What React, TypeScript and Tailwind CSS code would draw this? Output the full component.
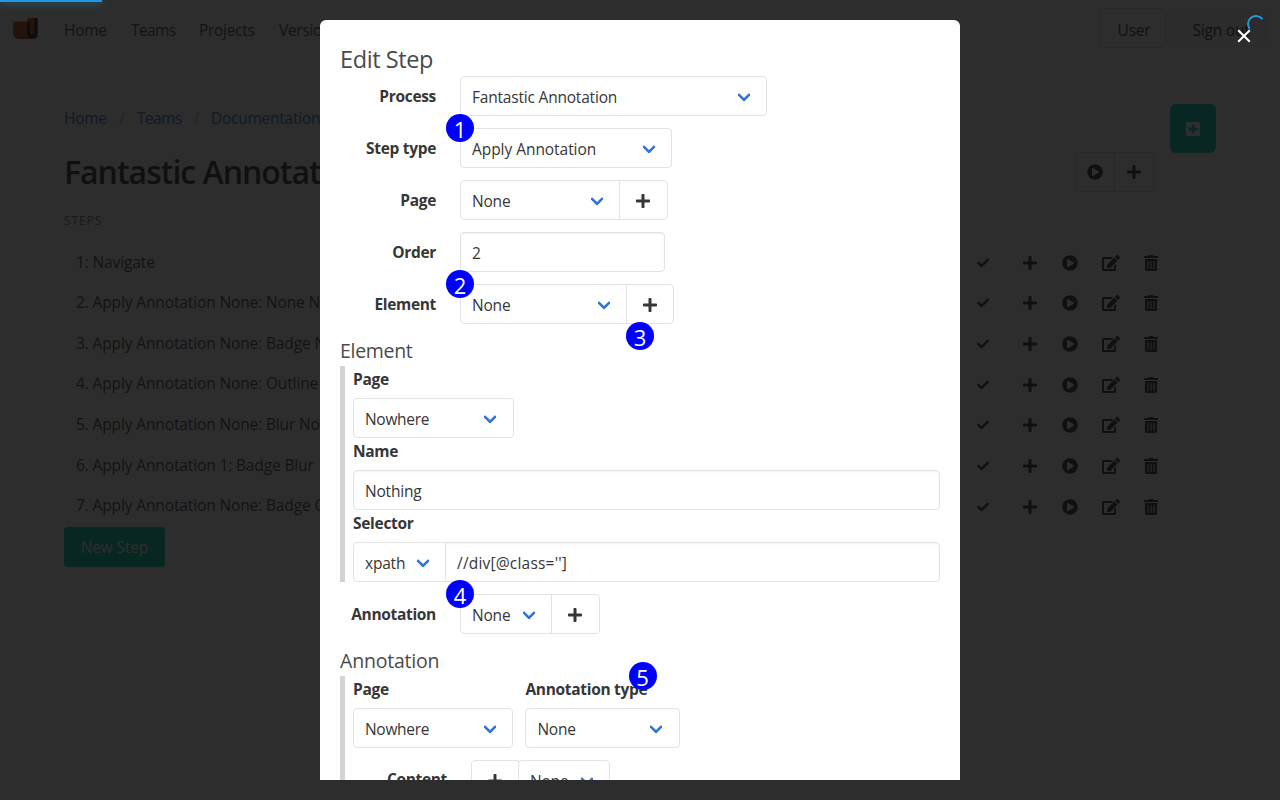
import type { ReactNode } from "react";
import { FaCheck, FaEdit, FaPlayCircle, FaPlus, FaPlusSquare, FaTrashAlt } from "react-icons/fa";

const steps = [
  "1: Navigate",
  "2. Apply Annotation None: None None",
  "3. Apply Annotation None: Badge None",
  "4. Apply Annotation None: Outline None",
  "5. Apply Annotation None: Blur None",
  "6. Apply Annotation 1: Badge Blur",
  "7. Apply Annotation None: Badge Outline",
];

function Select({ children, className = "" }: { children: ReactNode; className?: string }) {
  return (
    <div className={`relative h-10 shrink-0 rounded border border-[#e2e2e2] bg-white pl-[11px] leading-[38px] text-[#363636] ${className}`}>
      <span className="block pt-px">{children}</span>
      <span className="absolute right-[17.5px] top-1/2 -mt-[6.500px] size-[10px] -rotate-45 rounded-[2px] border-b-[3px] border-l-[3px] border-[#3273dc]" />
    </div>
  );
}

function Input({ children, className = "" }: { children: ReactNode; className?: string }) {
  return (
    <div className={`h-10 rounded border border-[#e2e2e2] bg-white pl-[11px] pt-px leading-[38px] text-[#363636] shadow-[inset_0_1px_2px_rgba(10,10,10,0.05)] ${className}`}>
      {children}
    </div>
  );
}

function PlusButton({ className = "" }: { className?: string }) {
  return (
    <button className={`flex h-10 shrink-0 items-center justify-center border border-[#e2e2e2] bg-white pt-px text-[#363636] ${className}`}>
      <FaPlus size={16} />
    </button>
  );
}

function Row({ label, children }: { label: string; children: ReactNode }) {
  return (
    <div className="mb-3 flex">
      <div className="mr-6 w-24 shrink-0 pt-[8px] text-right font-bold leading-6 tracking-[-0.32px] text-[#363636]">{label}</div>
      <div className="flex">{children}</div>
    </div>
  );
}

function Label({ children }: { children: ReactNode }) {
  return <div className="mb-2 h-6 pt-px font-bold leading-6 tracking-[-0.3px] text-[#363636]">{children}</div>;
}

function Badge({ n, className }: { n: number; className: string }) {
  return (
    <div className={`absolute size-7 rounded-full bg-[#0000ff] pt-px text-center text-[22px] leading-7 tracking-normal text-white ${className}`}>
      {n}
    </div>
  );
}

function Page() {
  return (
    <div className="h-full">
      <nav className="flex h-[60px] items-center pl-3 pr-3">
        <svg width="27" height="24" viewBox="0 0 27 24">
          <defs>
            <linearGradient id="logo" x1="0" y1="0" x2="1" y2="1">
              <stop offset="0" stopColor="#b8581a" />
              <stop offset="1" stopColor="#b03c18" />
            </linearGradient>
          </defs>
          <path d="M1 3.500H15V2Q15 0 17.500 0H25.500V17Q25.500 21 21.500 21H7Q1 21 1 14Z" fill="url(#logo)" />
          <path d="M16.500 4V14.500Q16.500 18.500 20 18.500Q24 18.500 24 14.500V0" fill="none" stroke="#161616" strokeWidth="3" />
        </svg>
        <div className="-mt-px ml-[25px] flex flex-1 tracking-[-0.3px]">
          <span className="w-[67px]">Home</span>
          <span className="w-[68px] tracking-[-0.6px]">Teams</span>
          <span className="w-[80px]">Projects</span>
          <span>Versions</span>
        </div>
        <div className="-mt-1 flex gap-2">
          <span className="flex h-10 w-[66px] items-center justify-center rounded border border-[#dbdbdb] pl-[2px] pt-[3px] text-[#363636]">User</span>
          <span className="flex h-10 w-[94px] items-center justify-center rounded bg-[#f5f5f5] pt-[3px] text-[#363636]">Sign out</span>
        </div>
      </nav>
      <main className="px-16 pt-11">
        <div className="flex h-12">
          <div className="flex flex-1 pt-[2px] tracking-[-0.25px] text-[#3273dc]">
            <span className="w-[55px] tracking-[-0.3px]">Home</span>
            <span className="w-[18px] text-[#b5b5b5]">/</span>
            <span className="w-[57px] tracking-[-0.6px]">Teams</span>
            <span className="w-[17px] text-[#b5b5b5]">/</span>
            <span>Documentation</span>
          </div>
          <span className="flex h-[49px] w-[46px] items-center justify-center rounded-md bg-[#00d1b2] text-white">
            <FaPlusSquare size={16} />
          </span>
        </div>
        <div className="flex h-10 items-center pr-[62px]">
          <h1 className="flex-1 whitespace-nowrap text-[32px] font-semibold leading-10 tracking-[-1px] text-[#363636]">Fantastic Annotation</h1>
          <div className="flex text-[#363636]">
            <span className="flex h-10 w-[39px] items-center justify-center rounded-l border border-[#dbdbdb] pr-[2px]"><FaPlayCircle size={16} /></span>
            <span className="-ml-px flex h-10 w-10 items-center justify-center rounded-r border border-[#dbdbdb]"><FaPlus size={16} /></span>
          </div>
        </div>
        <div className="h-[50.500px] pt-5 text-[12px] leading-[18px] tracking-[0.9px] text-[#7a7a7a]">STEPS</div>
        {steps.map((s) => (
          <div key={s} className="flex h-[40.65px] items-center pl-3">
            <span className="mt-[-2.500px] w-[884px] shrink-0 tracking-[-0.13px]">{s}</span>
            <span className="flex h-6 w-9 items-center justify-center rounded bg-[#fafafa] pl-[9px] text-[#363636]"><FaCheck size={12} /></span>
            <span className="ml-px flex w-[62px] justify-center pl-1"><FaPlus size={16} className="text-[#363636]" /></span>
            <span className="-ml-[9px] flex w-10 justify-center"><FaPlayCircle size={16} className="text-[#363636]" /></span>
            <span className="flex w-[41px] justify-center"><FaEdit size={18} className="text-[#363636]" /></span>
            <span className="flex w-10 justify-center"><FaTrashAlt size={16} className="text-[#363636]" /></span>
          </div>
        ))}
        <button className="h-10 w-[101px] rounded bg-[#00d1b2] tracking-[-0.15px] text-white">New Step</button>
      </main>
    </div>
  );
}

export default function App() {
  return (
    <div className="relative h-[800px] w-[1280px] overflow-hidden bg-white font-['Open_Sans','Noto_Sans',sans-serif] text-[15.5px] leading-6 tracking-[-0.2px] text-[#4a4a4a]">
      <Page />
      <div className="absolute inset-0 flex justify-center bg-[rgba(10,10,10,0.86)] py-5">
        <div className="relative w-[640px] overflow-hidden rounded-t-md bg-white p-5">
          <h2 className="h-9 pt-px text-[23.5px] leading-9 tracking-[-0.4px]">Edit Step</h2>
          <Row label="Process"><Select className="w-[307.4px]">Fantastic Annotation</Select></Row>
          <Row label="Step type"><Select className="w-[212px] tracking-[-0.05px]">Apply Annotation</Select></Row>
          <Row label="Page">
            <Select className="w-40 rounded-r-none">None</Select>
            <PlusButton className="-ml-px w-[48.5px] rounded-r" />
          </Row>
          <Row label="Order"><Input className="w-[205px]">2</Input></Row>
          <Row label="Element">
            <Select className="w-[167px] rounded-r-none">None</Select>
            <PlusButton className="-ml-px w-12 rounded-r" />
          </Row>
          <h3 className="h-[30px] text-[19.5px] leading-[30px] tracking-[-0.3px]">Element</h3>
          <div className="mb-3 h-[216px] border-l-[5px] border-[#d3d3d3] pl-2">
            <Label>Page</Label>
            <Select className="w-[160.5px] tracking-[-0.3px]">Nowhere</Select>
            <Label>Name</Label>
            <Input>Nothing</Input>
            <Label>Selector</Label>
            <div className="flex">
              <Select className="w-[93px] rounded-r-none">xpath</Select>
              <Input className="-ml-px flex-1 rounded-l-none tracking-[0.2px]">//div[@class='']</Input>
            </div>
          </div>
          <Row label="Annotation">
            <Select className="w-[92px] rounded-r-none">None</Select>
            <PlusButton className="-ml-px w-[48.5px] rounded-r" />
          </Row>
          <h3 className="h-[30px] text-[19.5px] leading-[30px] tracking-[-0.2px]">Annotation</h3>
          <div className="h-[216px] border-l-[5px] border-[#d3d3d3] pl-2">
            <div className="mb-3 flex gap-3">
              <div>
                <Label>Page</Label>
                <Select className="w-[160.4px] tracking-[-0.3px]">Nowhere</Select>
              </div>
              <div>
                <Label>Annotation type</Label>
                <Select className="w-[154.5px]">None</Select>
              </div>
            </div>
            <div className="flex">
              <div className="mr-6 w-[94px] pt-[7px] text-right font-bold tracking-[-0.35px] text-[#363636]">Content</div>
              <PlusButton className="w-12 rounded-l" />
              <Select className="-ml-px w-[92px]">None</Select>
            </div>
          </div>
          <Badge n={1} className="left-[126px] top-[94px]" />
          <Badge n={2} className="left-[126px] top-[250px]" />
          <Badge n={3} className="left-[306px] top-[302px]" />
          <Badge n={4} className="left-[126px] top-[560px]" />
          <Badge n={5} className="left-[308.5px] top-[642px]" />
        </div>
      </div>
      <div className="absolute left-0 top-0 h-[2px] w-[102px] bg-[#2299dd] shadow-[0_0_8px_#2299dd]" />
      <div className="absolute left-[1247px] top-[15px] size-[18px] rotate-[8deg] rounded-full border-2 border-transparent border-l-[#2299dd] border-t-[#2299dd]" />
      <svg className="absolute left-[1236px] top-[28px]" width="16" height="16" viewBox="0 0 16 16">
        <path d="M2.200 2.200L13.800 13.800M13.800 2.200L2.200 13.800" stroke="#fff" strokeWidth="2" />
      </svg>
    </div>
  );
}
